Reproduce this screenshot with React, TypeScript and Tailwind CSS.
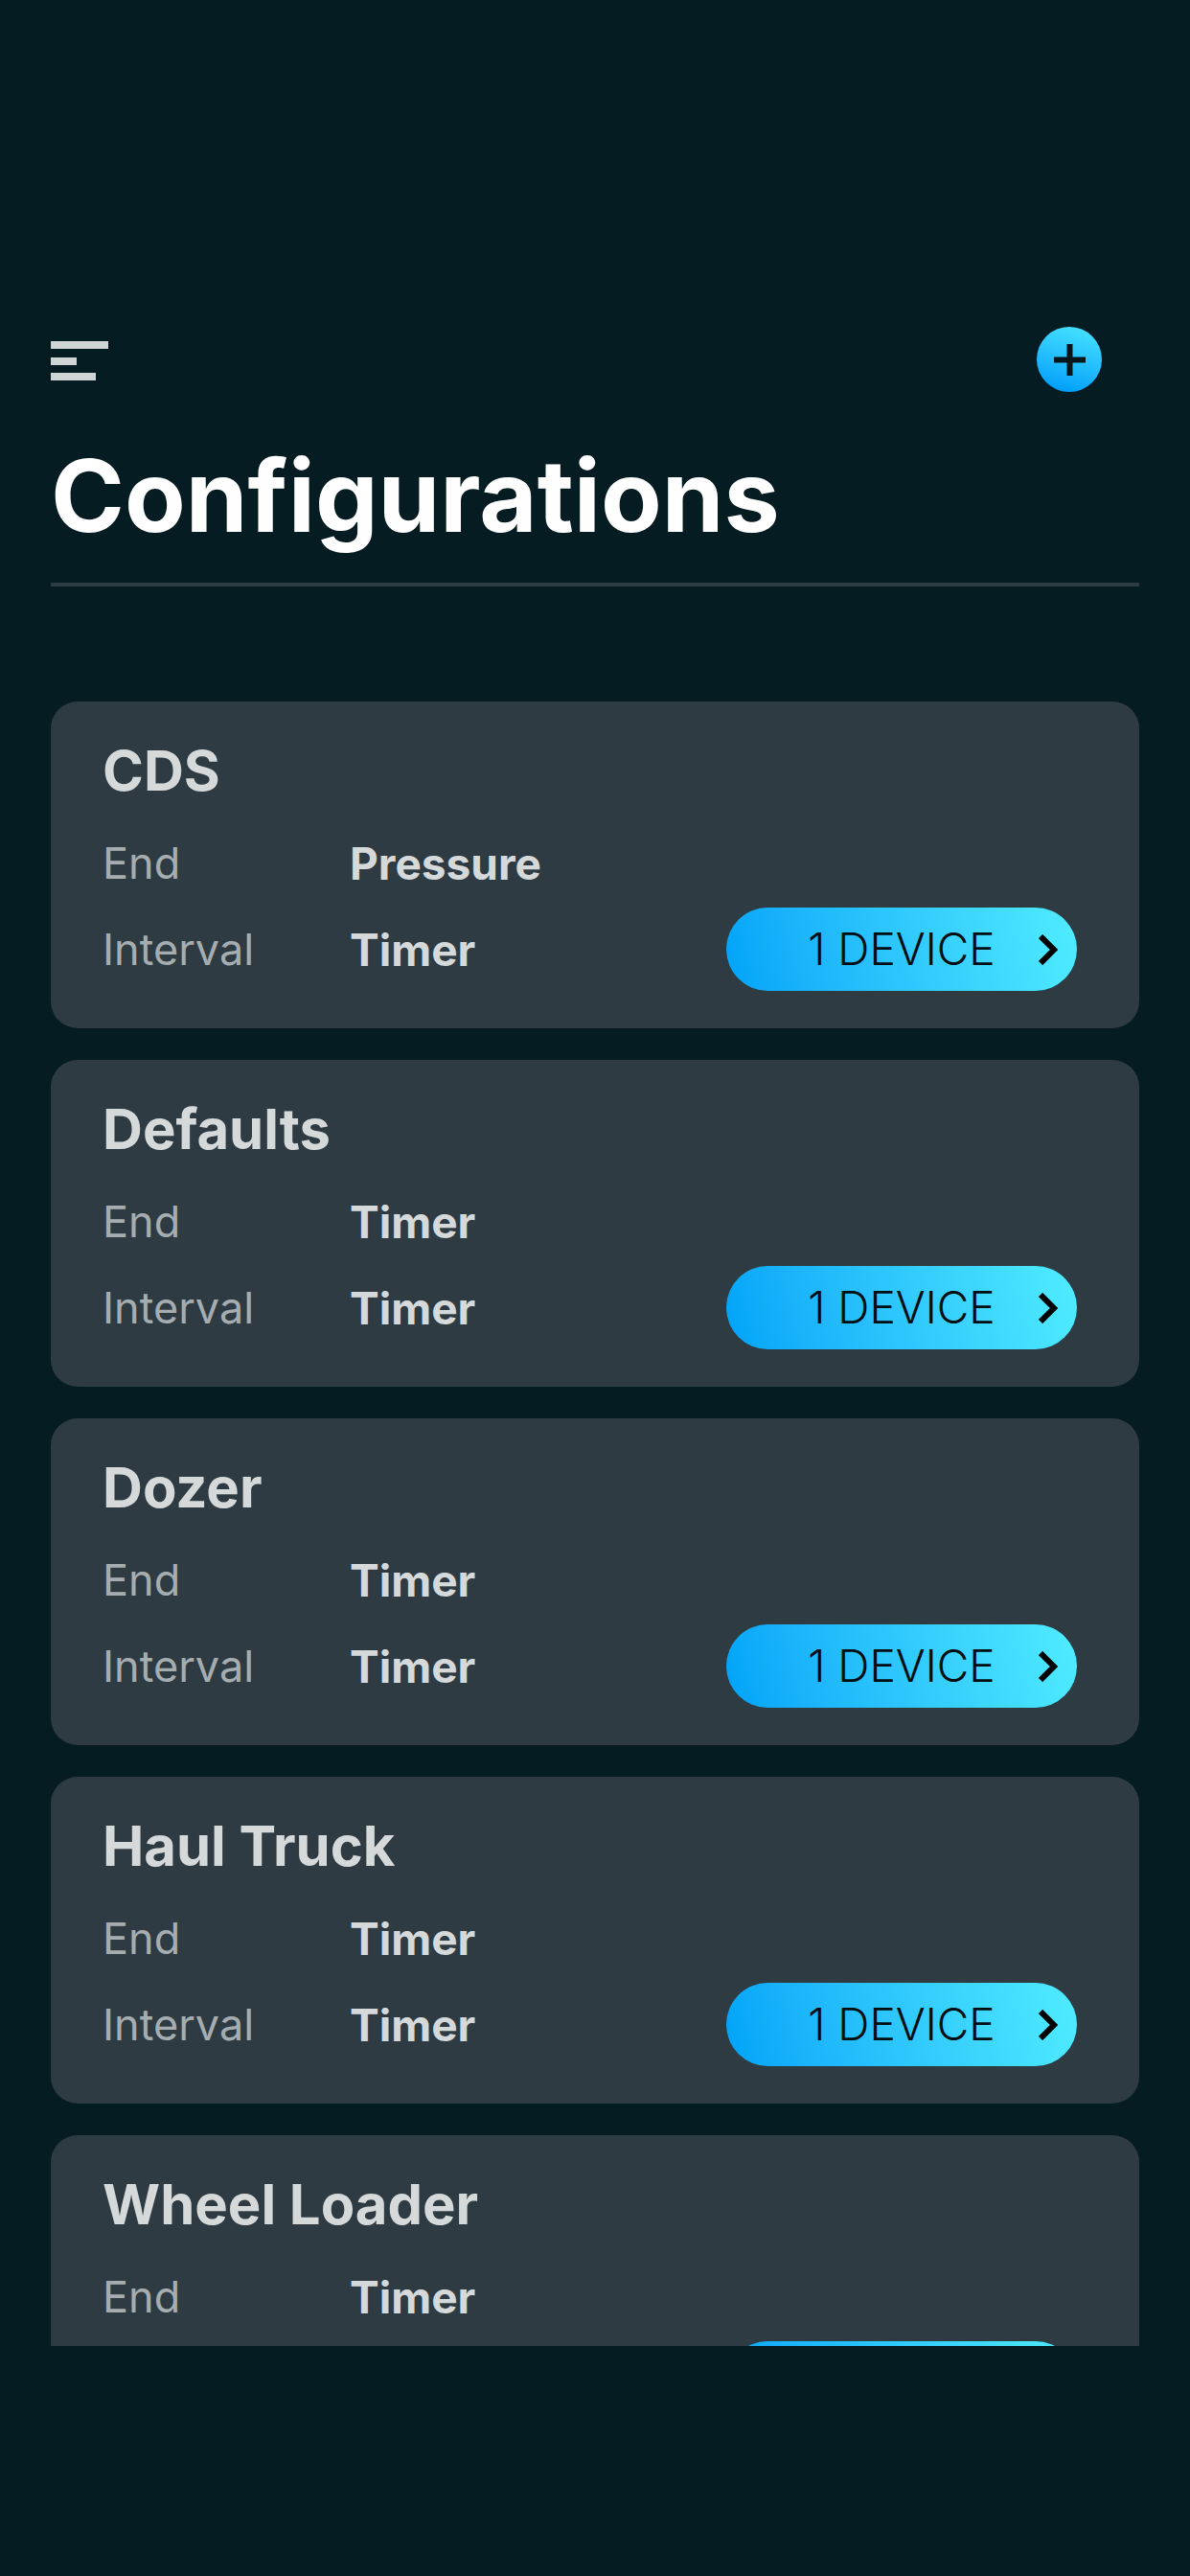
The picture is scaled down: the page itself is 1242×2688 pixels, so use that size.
interface Configuration {
  name: string;
  end: string;
  interval: string;
  devices: number;
}

const configurations: Configuration[] = [
  { name: 'CDS', end: 'Pressure', interval: 'Timer', devices: 1 },
  { name: 'Defaults', end: 'Timer', interval: 'Timer', devices: 1 },
  { name: 'Dozer', end: 'Timer', interval: 'Timer', devices: 1 },
  { name: 'Haul Truck', end: 'Timer', interval: 'Timer', devices: 1 },
  { name: 'Wheel Loader', end: 'Timer', interval: 'Timer', devices: 1 },
];

function DeviceButton({ count }: { count: number }) {
  return (
    <button
      type="button"
      className="mb-0.5 grid h-[87px] w-[366px] grid-cols-[1fr_auto_1fr] items-center rounded-full bg-linear-75 from-[#00a3f8] to-[#50ecff] text-[46px] font-light text-[#020d12]"
    >
      <span className="col-start-2">
        {count} {count === 1 ? 'DEVICE' : 'DEVICES'}
      </span>
      <svg className="mr-5 h-8 w-5 justify-self-end" viewBox="0 0 20 32" fill="none" stroke="#000" strokeWidth={6} aria-hidden="true">
        <path d="M2 2l14 14L2 30" />
      </svg>
    </button>
  );
}

function ConfigurationCard({ config }: { config: Configuration }) {
  return (
    <li className="shrink-0 rounded-[28px] bg-[#2e3b42] pt-9 pr-[65px] pb-[37px] pl-[54px]">
      <h2 className="text-[58px] leading-[72px] font-bold text-[#d5d9da]">{config.name}</h2>
      <div className="mt-4 flex items-end justify-between">
        <dl className="grid grid-cols-[258px_auto] text-[46px] leading-[90px]">
          <dt className="text-[45px] text-[#a6adb0]">End</dt>
          <dd className="font-bold text-[#d5d9da]">{config.end}</dd>
          <dt className="text-[45px] text-[#a6adb0]">Interval</dt>
          <dd className="font-bold text-[#d5d9da]">{config.interval}</dd>
        </dl>
        <DeviceButton count={config.devices} />
      </div>
    </li>
  );
}

export default function App() {
  return (
    <div className="flex h-screen flex-col bg-[#051c22] px-[53px] pt-[341px] pb-60 font-['Inter',sans-serif]">
      <header className="shrink-0 border-b-4 border-[#2e3b42]">
        <div className="flex items-center justify-between pr-[39px]">
          <button type="button" aria-label="Open menu" className="pt-1">
            <svg className="block h-[42px] w-[60px]" viewBox="0 0 60 42" fill="#cfd5d5" aria-hidden="true">
              <path d="M0 0h60v8H0zM0 17h27v8H0zM0 33h47v8H0z" />
            </svg>
          </button>
          <button
            type="button"
            aria-label="Add configuration"
            className="flex size-[68px] items-center justify-center rounded-full bg-linear-15 from-[#00a0fa] from-10% to-[#48e6ff]"
          >
            <svg className="size-[33px]" viewBox="0 0 33 33" fill="none" stroke="#04161c" strokeWidth={6} aria-hidden="true">
              <path d="M16.5 0v33M0 16.5h33" />
            </svg>
          </button>
        </div>
        <h1 className="mt-12 mb-[31px] text-[104px] leading-[120px] font-bold text-white">Configurations</h1>
      </header>

      <main className="min-h-0 flex-1 overflow-hidden pt-[120px]">
        <ul className="flex flex-col gap-[33px]">
          {configurations.map((config) => (
            <ConfigurationCard key={config.name} config={config} />
          ))}
        </ul>
      </main>
    </div>
  );
}
